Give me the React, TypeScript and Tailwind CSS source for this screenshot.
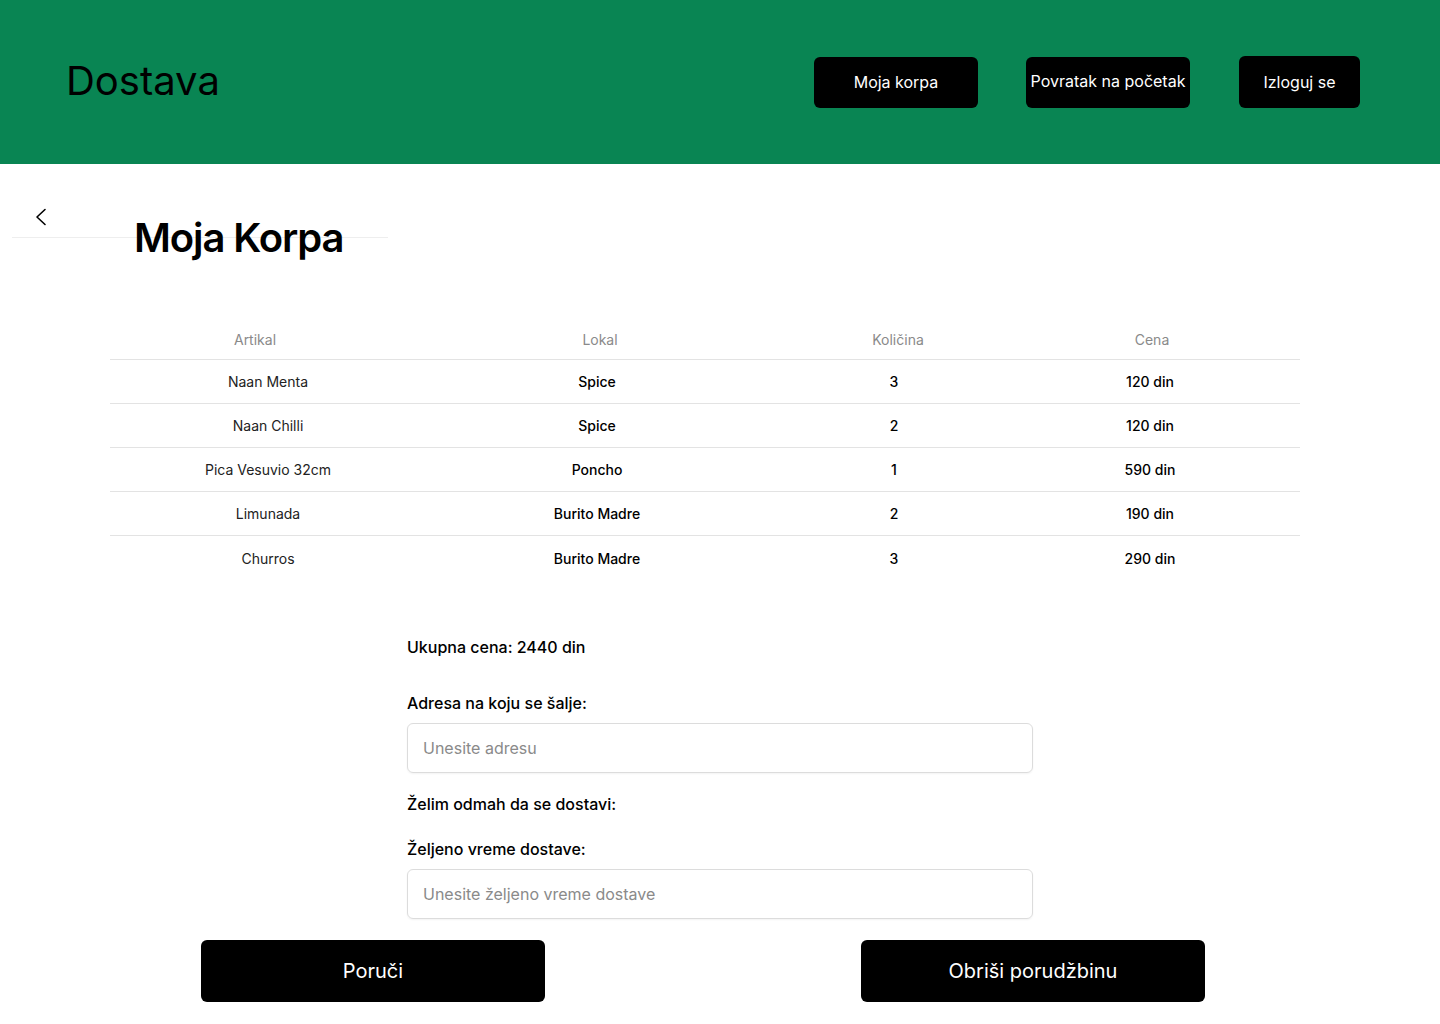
const font = { fontFamily: "Inter, 'Noto Sans', sans-serif" };

const items = [
  { name: "Naan Menta", place: "Spice", qty: 3, price: "120 din" },
  { name: "Naan Chilli", place: "Spice", qty: 2, price: "120 din" },
  { name: "Pica Vesuvio 32cm", place: "Poncho", qty: 1, price: "590 din" },
  { name: "Limunada", place: "Burito Madre", qty: 2, price: "190 din" },
  { name: "Churros", place: "Burito Madre", qty: 3, price: "290 din" },
];

export default function App() {
  return (
    <div className="w-[1440px] min-h-[1024px] bg-white text-black" style={font}>
      {/* Header */}
      <header className="h-[164px] bg-[#098553] flex items-center justify-between pl-[66px] pr-[80px]">
        <h1 className="text-[40px] leading-[48px] font-normal text-black -mt-[2px]">Dostava</h1>
        <nav className="flex items-center">
          <button className="w-[164px] h-[51px] rounded-[6px] bg-black text-white text-[16px] font-normal">
            Moja korpa
          </button>
          <button className="ml-[48px] w-[164px] h-[51px] rounded-[6px] bg-black text-white text-[16px] font-normal pb-[2px] whitespace-nowrap">
            Povratak na početak
          </button>
          <button className="ml-[49px] w-[121px] h-[52px] rounded-[6px] bg-black text-white text-[16px] font-normal">
            Izloguj se
          </button>
        </nav>
      </header>

      {/* Title */}
      <div className="relative flex items-start h-[98px]">
        <div className="absolute left-[12px] top-[73px] w-[376px] h-px bg-[#eeeeee]" />
        <div className="w-[134px] pl-[34px] pt-[44px]">
          <svg width="14" height="18" viewBox="0 0 14 18" fill="none">
            <polyline points="11,1.5 3,9 11,16.5" stroke="black" strokeWidth="1.6" strokeLinecap="round" strokeLinejoin="round" />
          </svg>
        </div>
        <h2 className="relative pt-[50px] text-[40px] leading-[48px] font-semibold tracking-[-1.1px]">Moja Korpa</h2>
      </div>

      {/* Table */}
      <div className="mt-[58px] ml-[110px] w-[1190px] text-[14px]">
        <div className="grid grid-cols-[290px_400px_196px_312px] h-[40px] items-center text-[#8a8a8a] border-b border-[#e3e3e3]">
          <div className="text-center">Artikal</div>
          <div className="text-center">Lokal</div>
          <div className="text-center">Količina</div>
          <div className="text-center">Cena</div>
        </div>
        {items.map((it, i) => (
          <div
            key={i}
            className={`grid grid-cols-[316px_342px_252px_260px_20px] h-[44px] items-center ${
              i < items.length - 1 ? "border-b border-[#e3e3e3]" : ""
            }`}
          >
            <div className="text-center text-[#222]">{it.name}</div>
            <div className="text-center font-medium">{it.place}</div>
            <div className="text-center font-medium">{it.qty}</div>
            <div className="text-center font-medium">{it.price}</div>
            <div />
          </div>
        ))}
      </div>

      {/* Form */}
      <div className="ml-[407px] w-[626px] mt-[55px] flex flex-col text-[16px]">
        <p className="leading-[24px] font-medium">Ukupna cena: 2440 din</p>
        <label className="mt-[32px] leading-[24px] font-medium">Adresa na koju se šalje:</label>
        <input
          className="mt-[8px] h-[50px] rounded-[6px] border border-[#dcdcdc] px-[15px] text-[16px] placeholder:text-[#8a8a8a] outline-none shadow-[0_1px_2px_rgba(0,0,0,0.05)]"
          placeholder="Unesite adresu"
        />
        <p className="mt-[19px] leading-[24px] font-medium">Želim odmah da se dostavi:</p>
        <label className="mt-[21px] leading-[24px] font-medium">Željeno vreme dostave:</label>
        <input
          className="mt-[8px] h-[50px] rounded-[6px] border border-[#dcdcdc] px-[15px] text-[16px] placeholder:text-[#8a8a8a] outline-none shadow-[0_1px_2px_rgba(0,0,0,0.05)]"
          placeholder="Unesite željeno vreme dostave"
        />
      </div>

      {/* Actions */}
      <div className="mt-[21px] pl-[201px] flex gap-[316px]">
        <button className="w-[344px] h-[62px] rounded-[6px] bg-black text-white text-[20px] font-normal">
          Poruči
        </button>
        <button className="w-[344px] h-[62px] rounded-[6px] bg-black text-white text-[20px] font-normal">
          Obriši porudžbinu
        </button>
      </div>
    </div>
  );
}
